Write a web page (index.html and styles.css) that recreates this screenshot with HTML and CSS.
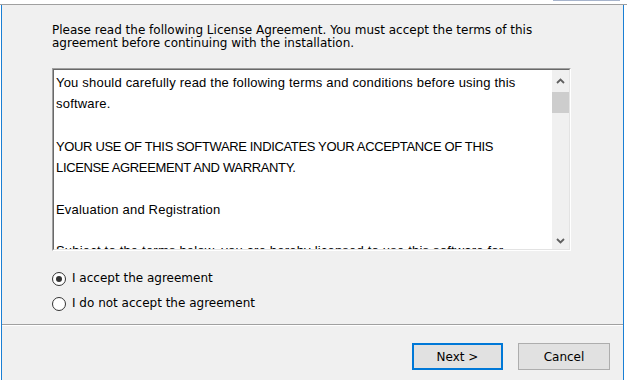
FILE: index.html
```html
<!DOCTYPE html>
<html lang="en">
<head>
<meta charset="utf-8">
<title>License Agreement</title>
<link rel="stylesheet" href="styles.css">
</head>
<body>
<div class="top"><div class="topbar"></div></div>
<div class="window">
  <div class="page">
    <p class="intro">Please read the following License Agreement. You must accept the terms of this agreement before continuing with the installation.</p>
    <div class="memo">
      <div class="memo-inner">
        <div class="memo-text">
          <p>You should carefully read the following terms and conditions before using this software.</p>
          <p class="caps">YOUR USE OF THIS SOFTWARE INDICATES YOUR ACCEPTANCE OF THIS LICENSE AGREEMENT AND WARRANTY.</p>
          <p>Evaluation and Registration</p>
          <p class="cut">Subject to the terms below, you are hereby licensed to use this software for</p>
        </div>
        <div class="scrollbar">
          <div class="sb-btn sb-up">
            <svg width="9" height="6" viewBox="0 0 9 6"><polyline points="1,5 4.5,1.5 8,5" fill="none" stroke="#606060" stroke-width="1.8"/></svg>
          </div>
          <div class="sb-thumb"></div>
          <div class="sb-track"></div>
          <div class="sb-btn sb-down">
            <svg width="9" height="6" viewBox="0 0 9 6"><polyline points="1,1 4.5,4.5 8,1" fill="none" stroke="#606060" stroke-width="1.8"/></svg>
          </div>
        </div>
      </div>
    </div>
    <div class="radios">
      <div class="radio"><span class="circle"><span class="dot"></span></span><span class="label">I accept the agreement</span></div>
      <div class="radio"><span class="circle"></span><span class="label">I do not accept the agreement</span></div>
    </div>
  </div>
  <div class="footer">
    <button class="btn default">Next &gt;</button>
    <button class="btn">Cancel</button>
  </div>
</div>
</body>
</html>
```
FILE: styles.css
```css
html, body {
  margin: 0;
  padding: 0;
  background: #ffffff;
  width: 627px;
  height: 380px;
  overflow: hidden;
}

body {
  font-family: "DejaVu Sans", sans-serif;
  font-size: 12px;
  color: #000000;
}

.top {
  height: 4px;
  background: #ffffff;
  border-bottom: 1px solid #a0a0a0;
  display: flex;
  justify-content: flex-end;
}

.topbar {
  width: 67px;
  height: 1px;
  margin-right: 7px;
  background: #a7b4cc;
}

.window {
  margin-left: 1px;
  width: 621px;
  height: 375px;
  border-left: 1px solid #1a7fd4;
  border-right: 1px solid #1a7fd4;
  background: #f0f0f0;
}

.page {
  padding: 19px 0 8px 50px;
}

.intro {
  margin: 0;
  width: 519px;
  line-height: 13px;
}

.memo {
  margin-top: 18px;
  width: 517px;
  height: 181px;
  border: 1px solid;
  border-color: #a0a0a0 #ffffff #ffffff #a0a0a0;
}

.memo-inner {
  height: 179px;
  border: 1px solid;
  border-color: #696969 #e3e3e3 #e3e3e3 #696969;
  background: #ffffff;
  display: flex;
}

.memo-text {
  flex: 1;
  overflow: hidden;
  padding: 2px 16px 0 2px;
  font-family: "Liberation Sans", Arial, sans-serif;
  font-size: 13px;
  line-height: 21.2px;
  letter-spacing: 0.2px;
}

.memo-text p {
  margin: 0 0 21.2px;
}

.memo-text p.caps {
  letter-spacing: -0.35px;
}

.memo-text p.cut {
  margin-top: -2px;
  margin-bottom: 0;
}

.scrollbar {
  width: 17px;
  background: #f0f0f0;
  display: flex;
  flex-direction: column;
}

.sb-btn {
  display: flex;
  align-items: center;
  justify-content: center;
}

.sb-up {
  height: 22px;
}

.sb-down {
  height: 17px;
}

.sb-thumb {
  height: 21px;
  background: #cdcdcd;
}

.sb-track {
  flex: 1;
}

.radios {
  margin-top: 15px;
  display: flex;
  flex-direction: column;
}

.radio {
  height: 25px;
  display: flex;
  align-items: center;
  gap: 6px;
}

.circle {
  box-sizing: border-box;
  width: 14px;
  height: 14px;
  border: 1px solid #333333;
  border-radius: 50%;
  background: #ffffff;
  display: flex;
  align-items: center;
  justify-content: center;
}

.dot {
  width: 6px;
  height: 6px;
  border-radius: 50%;
  background: #333333;
}

.label {
  line-height: 15px;
}

.footer {
  border-top: 1px solid #a0a0a0;
  box-shadow: inset 0 1px #ffffff;
  padding: 18px 13px 0 0;
  display: flex;
  justify-content: flex-end;
  gap: 15px;
}

.btn {
  box-sizing: border-box;
  width: 91px;
  height: 27px;
  margin: 0;
  padding: 0;
  font-family: "DejaVu Sans", sans-serif;
  font-size: 12px;
  color: #000000;
  background: #e1e1e1;
  border: 1px solid #adadad;
}

.btn.default {
  border: 2px solid #0078d7;
}

.btn + .btn {
  width: 92px;
}
```
